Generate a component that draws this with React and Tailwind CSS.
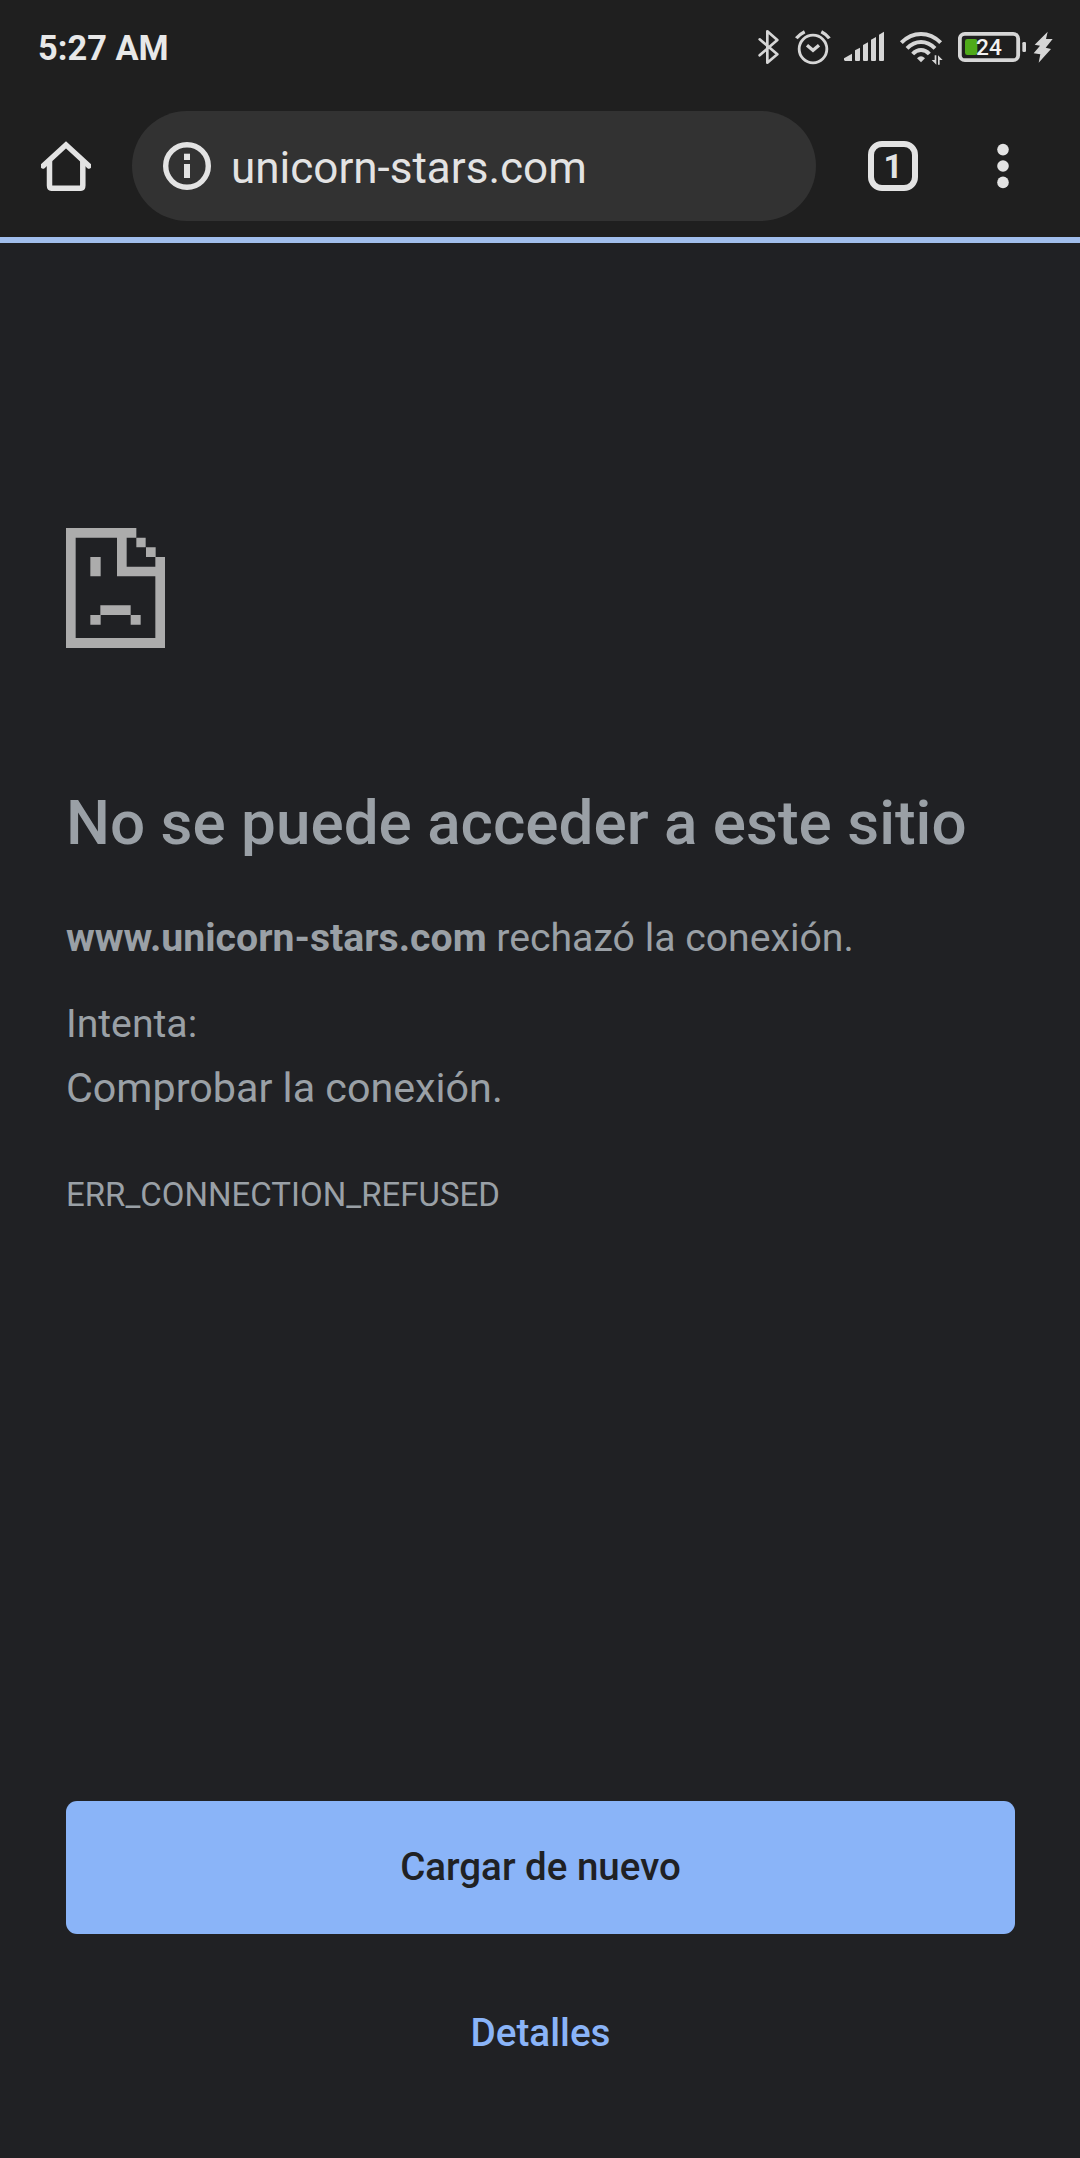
import React from "react";

function Bluetooth() {
  return (
    <svg className="h-[36px] w-[22px]" viewBox="54 57 66 108" fill="none" stroke="#d6d6d6" strokeWidth="8" strokeLinecap="round" strokeLinejoin="round">
      <path d="M59 88 L112 133 L82 158 V64 L112 90 L59 136" />
    </svg>
  );
}

function Alarm() {
  return (
    <svg className="ml-[15px] h-[36px] w-[36px]" viewBox="165 57 108 108" fill="none" stroke="#d6d6d6" strokeWidth="8.5">
      <circle cx="219" cy="117" r="41.5" />
      <path d="M169 85 Q178 73 194 65 M244 65 Q260 73 268 85" strokeWidth="10" />
      <path d="M201 106 L219 121 L237 106" strokeWidth="10" />
    </svg>
  );
}

function Signal() {
  return (
    <svg className="ml-[13px] h-[36px] w-[40px]" viewBox="312 57 120 108" fill="#d6d6d6">
      <path d="M312 150 V145 L336 131 V153 H315 Z" />
      <path d="M345 121 L360 113 V151 L358 153 H347 L345 151 Z" />
      <path d="M369 105 L384 97 V151 L382 153 H371 L369 151 Z" />
      <path d="M393 89 L408 81 V151 L406 153 H395 L393 151 Z" />
      <path d="M417 74 L432 65 V151 L430 153 H419 L417 151 Z" />
    </svg>
  );
}

function Wifi() {
  return (
    <svg className="ml-[15px] h-[36px] w-[45px]" viewBox="27 57 135 108" fill="none" stroke="#d6d6d6" strokeWidth="12">
      <path d="M34 98 Q60 72 93 72 Q126 72 152 98" />
      <path d="M51 115 Q70 96 93 96 Q116 96 135 115" />
      <path d="M68 132 Q79 120 93 120 Q107 120 118 132" />
      <path d="M81 145 Q93 133 105 145 L93 157 Z" fill="#d6d6d6" stroke="none" />
      <path d="M134 136 H139 V164 L125 150 H134 Z M144 136 L158 150 H149 V164 H144 Z" fill="#d6d6d6" stroke="none" />
    </svg>
  );
}

function Battery() {
  return (
    <div className="relative ml-[14px] h-[36px] w-[68px]">
      <svg className="h-[36px] w-[68px]" viewBox="204 57 204 108">
        <rect x="209.500" y="71.500" width="175" height="79" rx="15" fill="none" stroke="#d6d6d6" strokeWidth="11.5" />
        <rect x="225" y="87" width="37" height="48" rx="7" fill="#4faa1a" />
        <rect x="397" y="96" width="11" height="30" rx="4" fill="#d6d6d6" />
      </svg>
      <span className="absolute left-[18px] top-[5px] text-[22.7px] leading-[28px] font-medium text-[#f2f2f2]">24</span>
    </div>
  );
}

function Bolt() {
  return (
    <svg className="ml-[7px] h-[36px] w-[20px]" viewBox="429 57 60 108" fill="#d6d6d6">
      <path d="M473 65 L434 104 L450 107 L431 130 L451 133 L446 158 L483 117 L467 113 L488 87 L468 87 Z" />
    </svg>
  );
}

function SadPage() {
  return (
    <svg className="mt-[285px] h-[120px] w-[99px]" viewBox="78 54 297 360" fill="#acacac">
      <path d="M78 54 H289 V83 H260 V170 H346 V141 H375 V414 H78 Z M107 83 V384 H346 V199 H231 V83 Z" fillRule="evenodd" />
      <path d="M289 83 H317 V112 H289 Z M318 112 H347 V141 H318 Z M151 141 H182 V199 H151 Z M181 286 H272 V315 H181 Z M151 315 H182 V344 H151 Z M272 315 H302 V344 H272 Z" />
    </svg>
  );
}

export default function App() {
  return (
    <div className="flex h-[2158px] w-[1080px] flex-col bg-[#202124] font-[Roboto,sans-serif] text-[#9aa0a6]">
      <header className="bg-[#1f1f1f]">
        <div className="flex h-[111px] items-start justify-between pt-[29px] pr-[27px] pl-[38px]">
          <span className="text-[34.4px] leading-[39px] font-bold text-[#e8e8e8]">5:27 AM</span>
          <div className="flex">
            <Bluetooth />
            <Alarm />
            <Signal />
            <Wifi />
            <Battery />
            <Bolt />
          </div>
        </div>

        <div className="flex h-[126px] items-start">
          <div className="flex h-[110px] items-center pl-[41px]">
            <svg className="size-[50px]" viewBox="41 141 50 50" fill="none" stroke="#e3e3e3">
              <path d="M49.500 161 V185.500 Q49.500 188.300 52.300 188.300 H80 Q82.800 188.300 82.800 185.500 V161" strokeWidth="5.500" />
              <path d="M43 166 L66 144.800 L89 166" strokeWidth="5.400" strokeLinecap="round" />
            </svg>
            <div className="ml-[41px] flex h-[110px] w-[684px] items-center rounded-full bg-[#323232] pl-[31px]">
              <svg className="size-[48px]" viewBox="0 0 48 48" fill="#e3e3e3">
                <circle cx="24" cy="24" r="21.300" fill="none" stroke="#e3e3e3" strokeWidth="5.400" />
                <rect x="21" y="11.700" width="6" height="6.300" />
                <rect x="21" y="22" width="6" height="14" />
              </svg>
              <span className="ml-[20px] pt-1 text-[44px] leading-[52px] text-[#e3e3e3]">unicorn-stars.com</span>
            </div>
            <div className="ml-[52px] flex size-[50px] items-center justify-center rounded-[14px] border-[6px] border-[#e3e3e3] text-[33.5px] leading-[39px] font-bold text-[#e3e3e3]">
              1
            </div>
            <svg className="ml-[79px] h-[46px] w-[12px]" viewBox="0 0 12 46" fill="#e3e3e3">
              <circle cx="6" cy="6.600" r="5.800" />
              <circle cx="6" cy="23" r="5.800" />
              <circle cx="6" cy="39.400" r="5.800" />
            </svg>
          </div>
        </div>
        <div className="h-[6px] bg-[#a1beec]" />
      </header>

      <main className="flex flex-col pr-[65px] pl-[66px]">
        <SadPage />
        <h1 className="mt-[138px] text-[62px] leading-[74px] font-medium whitespace-nowrap">No se puede acceder a este sitio</h1>
        <p className="mt-[50px] text-[39.2px] leading-[56px]">
          <strong className="font-bold">www.unicorn-stars.com</strong> rechazó la conexión.
        </p>
        <p className="mt-[30px] text-[39.2px] leading-[56px]">Intenta:</p>
        <p className="mt-[4px] text-[41.25px] leading-[64px]">Comprobar la conexión.</p>
        <p className="mt-[50px] text-[33px] leading-[50px]">ERR_CONNECTION_REFUSED</p>
        <button className="mt-[581px] h-[133px] rounded-[11px] bg-[#8ab4f8] pb-[2px] text-[38.5px] leading-[56px] font-medium text-[#202124]">
          Cargar de nuevo
        </button>
        <button className="mt-[71px] self-center text-[38.7px] leading-[56px] font-medium text-[#8ab4f8]">Detalles</button>
      </main>
    </div>
  );
}
